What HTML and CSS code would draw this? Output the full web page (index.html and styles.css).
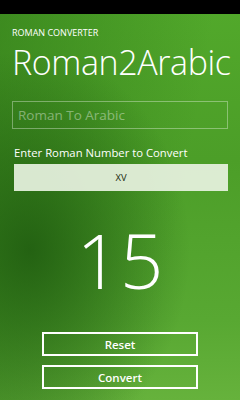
FILE: index.html
```html
<!DOCTYPE html>
<html lang="en">
  <head>
    <meta charset="UTF-8" />
    <meta name="viewport" content="width=device-width, initial-scale=1.0" />
    <title>Roman Converter</title>
    <link rel="stylesheet" href="styles.css">
  </head>
  <body>
    <div class="status-bar"></div>
    <div class="app">
      <div class="app-name">ROMAN CONVERTER</div>
      <div class="page-title">Roman2Arabic</div>
      <div class="mode-box">Roman To Arabic</div>
      <div class="input-label">Enter Roman Number to Convert</div>
      <div class="roman-input" id="romanInput">XV</div>
      <div class="result" id="result">15</div>
      <div class="buttons">
        <button class="app-button">Reset</button>
        <button class="app-button">Convert</button>
      </div>
    </div>
  </body>
</html>
```

FILE: styles.css
```css
body {
  font-family: "Open Sans", "Noto Sans", sans-serif;
  margin: 0;
  padding: 0;
  width: 240px;
  height: 400px;
  overflow: hidden;
  color: #fff;
  background-color: #4fa52a;
  background-image:
    radial-gradient(ellipse 160px 200px at 30px 250px, rgba(30, 90, 15, 0.85), rgba(30, 90, 15, 0) 100%),
    linear-gradient(100deg, rgba(40, 110, 20, 0.5) 0%, rgba(40, 110, 20, 0) 70%),
    linear-gradient(180deg, #52a92b 0%, #4c9e28 40%, #58a832 80%, #66b23c 100%);
}

.status-bar {
  height: 14px;
  background-color: #000;
}

.app {
  display: flex;
  flex-direction: column;
  padding: 0 12px;
}

.app-name {
  margin-top: 13px;
  font-size: 9px;
  line-height: 11px;
}

.page-title {
  margin-top: 7px;
  font-size: 34px;
  font-weight: 300;
  line-height: 34px;
  letter-spacing: -0.4px;
  white-space: nowrap;
}

.mode-box {
  margin-top: 22px;
  height: 26px;
  border: 1px solid rgba(255, 255, 255, 0.35);
  padding-left: 5px;
  font-size: 13.5px;
  line-height: 26px;
  color: rgba(255, 255, 255, 0.4);
}

.input-label {
  margin-top: 16px;
  padding-left: 2px;
  font-size: 11.3px;
  line-height: 16px;
}

.roman-input {
  margin-top: 3px;
  margin-left: 2px;
  height: 27px;
  background-color: rgba(232, 242, 225, 0.92);
  color: #1a2a10;
  font-size: 9.5px;
  line-height: 27px;
  text-align: center;
}

.result {
  margin-top: 29px;
  font-size: 76px;
  font-weight: 300;
  line-height: 80px;
  text-align: center;
}

.buttons {
  display: flex;
  flex-direction: column;
  align-items: center;
  gap: 9px;
  margin-top: 32px;
}

.app-button {
  width: 156px;
  height: 24px;
  border: 2px solid #fff;
  background: transparent;
  color: #fff;
  font-family: "Open Sans", "Noto Sans", sans-serif;
  font-size: 11.5px;
  font-weight: 600;
  padding: 0;
}
```
